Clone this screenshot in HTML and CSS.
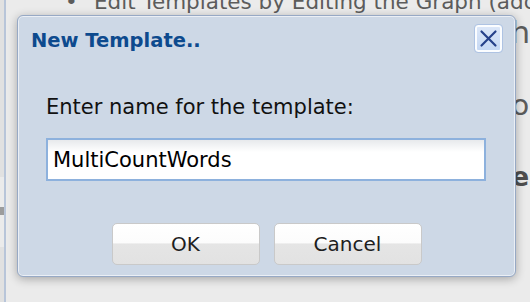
FILE: index.html
```html
<!DOCTYPE html>
<html lang="en">
<head>
    <meta charset="UTF-8">
    <meta name="viewport" content="width=device-width, initial-scale=1.0">
    <title>New Template</title>
    <link rel="stylesheet" href="styles.css">
</head>
<body>
    <div class="workspace">
        <div class="splitter"><span class="grip"></span></div>

        <div class="doc">
            <ul class="steps">
                <li>Edit Templates by Editing the Graph (add nodes and edges)</li>
            </ul>
            <p class="note">nodes and edges) and from the menu</p>
            <p class="para">Templates can be reused in any workflow.</p>
            <h3 class="heading">Organizing Your Saved Templates</h3>
        </div>
    </div>

    <!-- modal dialog over the page -->
    <div class="dialog" role="dialog" aria-labelledby="dialog-title">
        <div class="dialog-header">
            <h2 class="dialog-title" id="dialog-title">New Template..</h2>
            <button class="close-btn" type="button" aria-label="Close">
                <svg width="19" height="19" viewBox="0 0 19 19">
                    <path d="M2.5 2.5 L16.5 16.5 M16.5 2.5 L2.5 16.5" stroke="#26418a" stroke-width="2.2" stroke-linecap="round" fill="none"/>
                </svg>
            </button>
        </div>

        <div class="dialog-body">
            <label class="field-label" for="templateName">Enter name for the template:</label>
            <input class="field-input" type="text" id="templateName" value="MultiCountWords">
        </div>

        <div class="dialog-actions">
            <button class="btn" type="button">OK</button>
            <button class="btn" type="button">Cancel</button>
        </div>
    </div>
</body>
</html>
```

FILE: styles.css
```css
* {
    margin: 0;
    padding: 0;
    box-sizing: border-box;
    font-family: "DejaVu Sans", Verdana, sans-serif;
}

body {
    width: 530px;
    height: 302px;
    overflow: hidden;
    position: relative;
    background-color: #e2e2e2;
}

/* page behind the dialog */
.workspace {
    display: flex;
    height: 302px;
}

.splitter {
    width: 4px;
    padding-top: 177px;
    background-color: #e1e1e1;
}

.grip {
    display: block;
    height: 70px;
    background: linear-gradient(#ebebeb 30px, #9c9c9c 30px, #9c9c9c 38px, #ebebeb 38px);
}

.doc {
    flex: 1;
    overflow: hidden;
    white-space: nowrap;
    padding-left: 12px;
    border-left: 2px solid #b8c5d9;
    background-color: #ebebeb;
    color: #5c5c5c;
}

.steps {
    list-style: none;
    margin-top: -10px;
    font-size: 21.5px;
    line-height: 23px;
}

.steps li {
    display: flex;
    margin-left: 47px;
}

.steps li::before {
    content: "\2022";
    width: 29px;
    flex-shrink: 0;
}

.note {
    padding-left: 43px;
    font-size: 31px;
    line-height: 38px;
}

.para {
    margin-top: 37px;
    font-size: 29px;
    line-height: 34px;
}

.heading {
    margin-top: 40px;
    padding-left: 35px;
    font-size: 26px;
    line-height: 30px;
    color: #4e4e4e;
}

/* dialog */
.dialog {
    position: absolute;
    left: 17px;
    top: 15px;
    width: 499px;
    height: 262px;
    display: flex;
    flex-direction: column;
    background-color: #cdd8e6;
    border: 1px solid #97a9c5;
    border-radius: 6px;
    box-shadow: inset 0 0 0 1px rgba(255, 255, 255, 0.6), 0 2px 10px rgba(0, 0, 0, 0.3);
}

.dialog-header {
    display: flex;
    justify-content: space-between;
    align-items: flex-start;
    padding: 8px 12px 0 13px;
}

.dialog-title {
    margin-top: 6px;
    font-size: 19.5px;
    font-weight: bold;
    line-height: 22px;
    color: #0d4a8e;
}

.close-btn {
    width: 29px;
    height: 29px;
    display: flex;
    align-items: center;
    justify-content: center;
    border: 1px solid #aec3e3;
    border-radius: 4px;
    background: linear-gradient(#dde8f9, #c4d7f3);
    box-shadow: inset 0 0 0 2px #fbfdff;
    cursor: pointer;
}

.dialog-body {
    padding: 42px 29px 0 28px;
}

.field-label {
    display: block;
    font-size: 21px;
    line-height: 25px;
    color: #111;
}

.field-input {
    display: block;
    width: 100%;
    height: 43px;
    margin-top: 18px;
    padding: 0 5px;
    border: 2px solid #8db1dd;
    background: linear-gradient(#e7e9ec, #fff 12px);
    font-size: 21px;
    color: #000;
    outline: none;
}

.dialog-actions {
    display: flex;
    justify-content: center;
    gap: 14px;
    margin-top: auto;
    padding-bottom: 11px;
}

.btn {
    width: 148px;
    height: 42px;
    border: 1px solid #c9c9c9;
    border-radius: 5px;
    background: linear-gradient(#fff 0%, #fcfcfc 47%, #e5e5e5 50%, #e2e2e2 100%);
    font-size: 20px;
    color: #1e1e1e;
    cursor: pointer;
}
```
